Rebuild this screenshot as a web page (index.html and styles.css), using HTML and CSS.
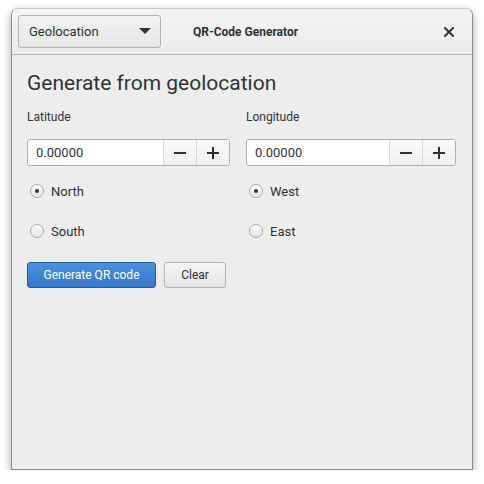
FILE: index.html
```html
<!DOCTYPE html>
<html>
<head>
<meta charset="utf-8">
<link rel="stylesheet" href="styles.css">
</head>
<body>
<div class="window">
  <div class="header">
    <div class="combo">
      <span>Geolocation</span>
      <svg class="caret" width="12" height="7" viewBox="0 0 12 7"><path d="M0 0 L12 0 L6 6 Z" fill="#2e3436"/></svg>
    </div>
    <div class="title">QR-Code Generator</div>
    <div class="close">
      <svg width="10" height="10" viewBox="0 0 10 10"><path d="M1 1 L9 9 M9 1 L1 9" stroke="#2e3436" stroke-width="2" stroke-linecap="square"/></svg>
    </div>
  </div>
  <div class="content">
    <h1 class="heading">Generate from geolocation</h1>
    <div class="cols">
      <div class="col col-lat">
        <div class="label">Latitude</div>
        <div class="spin">
          <div class="spin-entry">0.00000</div>
          <div class="spin-btn"><svg width="12" height="12" viewBox="0 0 12 12"><path d="M0 6 H12" stroke="#2e3436" stroke-width="2"/></svg></div>
          <div class="spin-btn"><svg width="12" height="12" viewBox="0 0 12 12"><path d="M0 6 H12 M6 0 V12" stroke="#2e3436" stroke-width="2"/></svg></div>
        </div>
        <div class="radio"><span class="dot checked"></span><span>North</span></div>
        <div class="radio"><span class="dot"></span><span>South</span></div>
      </div>
      <div class="col col-lon">
        <div class="label">Longitude</div>
        <div class="spin">
          <div class="spin-entry">0.00000</div>
          <div class="spin-btn"><svg width="12" height="12" viewBox="0 0 12 12"><path d="M0 6 H12" stroke="#2e3436" stroke-width="2"/></svg></div>
          <div class="spin-btn"><svg width="12" height="12" viewBox="0 0 12 12"><path d="M0 6 H12 M6 0 V12" stroke="#2e3436" stroke-width="2"/></svg></div>
        </div>
        <div class="radio"><span class="dot checked"></span><span>West</span></div>
        <div class="radio"><span class="dot"></span><span>East</span></div>
      </div>
    </div>
    <div class="actions">
      <button class="btn primary">Generate QR code</button>
      <button class="btn plain">Clear</button>
    </div>
  </div>
</div>
</body>
</html>
```

FILE: styles.css
```css
html, body {
  margin: 0;
  padding: 0;
  background: #ffffff;
}
body {
  font-family: Roboto, "Noto Sans", sans-serif;
  color: #2e3436;
  padding: 8px 0 0 11px;
}
.window {
  width: 460px;
  height: 460px;
  border: 1px solid #8e8e8e;
  border-top-color: #c8c8c8;
  border-radius: 7px 7px 0 0;
  background: #ededed;
  box-shadow: 0 3px 8px rgba(0,0,0,0.35);
  display: flex;
  flex-direction: column;
  overflow: hidden;
}
.header {
  height: 46px;
  flex: none;
  background: linear-gradient(#f4f4f4, #ebebeb);
  border-bottom: 1px solid #b6b6b6;
  display: flex;
  align-items: center;
  padding: 0 6px;
  box-sizing: border-box;
}
.combo {
  width: 143px;
  height: 33px;
  box-sizing: border-box;
  border: 1px solid #b3b3b3;
  border-radius: 3px;
  background: linear-gradient(#f3f3f3, #e6e6e6);
  display: flex;
  align-items: center;
  justify-content: space-between;
  padding: 0 9px 0 10px;
  font-size: 13px;
}
.title {
  font-weight: bold;
  font-size: 12px;
  margin-left: 32px;
}
.close {
  margin-left: auto;
  width: 34px;
  display: flex;
  justify-content: center;
  align-items: center;
}
.content {
  padding: 14px 16px 0 15px;
}
.heading {
  margin: 0;
  font-weight: normal;
  font-size: 21px;
  line-height: 28px;
}
.cols {
  display: flex;
  gap: 16px;
  margin-top: 12px;
}
.col-lat { width: 204px; }
.col-lon { width: 211px; }
.label {
  font-size: 12px;
  line-height: 16px;
}
.spin {
  margin-top: 14px;
  height: 27px;
  box-sizing: border-box;
  border: 1px solid #b0b0b0;
  border-radius: 3px;
  background: #ffffff;
  display: flex;
  overflow: hidden;
}
.spin-entry {
  flex: 1;
  font-size: 13px;
  line-height: 25px;
  padding-left: 8px;
}
.spin-btn {
  width: 32px;
  border-left: 1px solid #d8d8d8;
  background: linear-gradient(#fafafa, #f0f0f0);
  display: flex;
  align-items: center;
  justify-content: center;
}
.radio {
  display: flex;
  align-items: center;
  gap: 7px;
  font-size: 13px;
  height: 20px;
  margin-top: 15px;
  padding-left: 3px;
}
.radio + .radio {
  margin-top: 20px;
}
.dot {
  width: 14px;
  height: 14px;
  box-sizing: border-box;
  border: 1px solid #a9a9a9;
  border-radius: 50%;
  background: linear-gradient(#fbfbfb, #e4e4e4);
  display: flex;
  align-items: center;
  justify-content: center;
}
.dot.checked::after {
  content: "";
  width: 4px;
  height: 4px;
  border-radius: 50%;
  background: #2e3436;
}
.actions {
  display: flex;
  gap: 8px;
  margin-top: 21px;
}
.btn {
  font-family: Roboto, "Noto Sans", sans-serif;
  font-size: 12px;
  height: 26px;
  box-sizing: border-box;
  border: 1px solid #b3b3b3;
  border-radius: 3px;
  background: linear-gradient(#f6f6f6, #e4e4e4);
  color: #2e3436;
  padding: 0;
  white-space: nowrap;
}
.btn.primary {
  width: 129px;
  border-color: #1c5ea8;
  background: linear-gradient(#4a90de, #357ace);
  color: #ffffff;
}
.btn.plain {
  width: 62px;
}
```
